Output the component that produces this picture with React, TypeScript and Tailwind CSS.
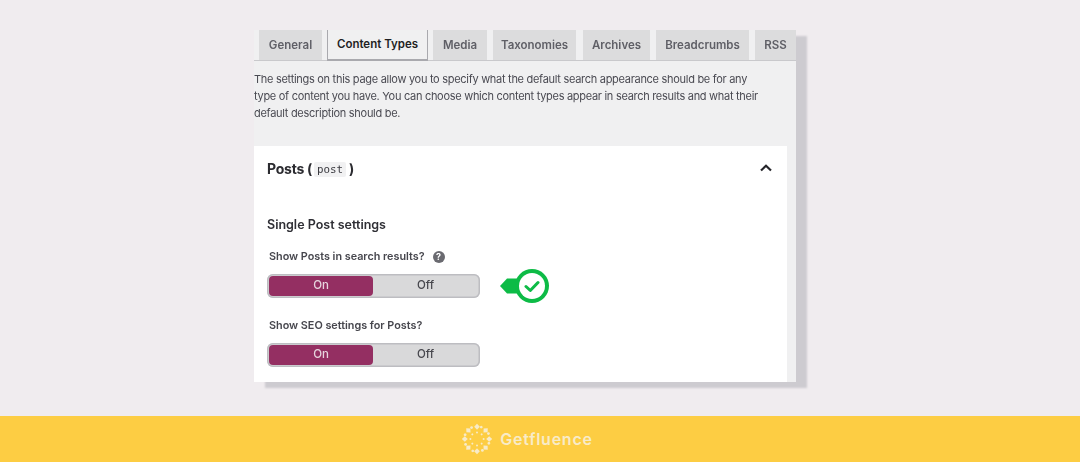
import React from "react";

const tabs = [
  { label: "General", w: "w-[63px]", ml: "ml-[5px]" },
  { label: "Content Types", w: "w-[101px]", ml: "ml-[5px]", active: true },
  { label: "Media", w: "w-[54px]", ml: "ml-[5px]" },
  { label: "Taxonomies", w: "w-[83px]", ml: "ml-[6px]" },
  { label: "Archives", w: "w-[67px]", ml: "ml-[7px]" },
  { label: "Breadcrumbs", w: "w-[93px]", ml: "ml-[6px]" },
  { label: "RSS", w: "w-[41px]", ml: "ml-[6px]" },
];

function Toggle() {
  return (
    <div className="flex h-[24px] w-[213px] rounded-[6px] bg-[#d9d9da] p-[2px] shadow-[inset_0_0_0_1.5px_#bdbdc1] text-[11.5px] font-medium">
      <div className="flex w-[104px] items-center justify-center rounded-[4px] bg-[#942f62] text-[#e6d5de]">On</div>
      <div className="flex flex-1 items-center justify-center text-[#47474d]">Off</div>
    </div>
  );
}

function Badge() {
  return (
    <svg width="50" height="36" viewBox="0 0 50 36" className="ml-[20px]">
      <path d="M0 18 L7 10.5 H24 V25.5 H7 Z" fill="#0dbb46" />
      <circle cx="32" cy="18" r="17" fill="#0dbb46" />
      <circle cx="32" cy="18" r="13" fill="#ffffff" />
      <path d="M26 18.5 L30.3 22.5 L38 14.5" fill="none" stroke="#0dbb46" strokeWidth="3" strokeLinecap="round" strokeLinejoin="round" />
    </svg>
  );
}

function Logo() {
  const n = 8;
  const items = Array.from({ length: n }, (_, i) => (i * 360) / n);
  return (
    <svg width="32" height="32" viewBox="0 0 32 32">
      <g fill="#f8ebc8">
        {items.map((a) => (
          <g key={a} transform={`rotate(${a} 16 16)`}>
            <path d="M16 0.8 L18.8 3.8 L16 6.8 L13.2 3.8 Z" />
            <circle cx="10.6" cy="4.6" r="1.4" />
            <circle cx="16" cy="9.4" r="1" />
          </g>
        ))}
      </g>
    </svg>
  );
}

export default function App() {
  return (
    <div
      className="flex h-[462px] w-[1080px] flex-col overflow-hidden bg-[#f0ecef]"
      style={{ fontFamily: "Inter, 'Liberation Sans', sans-serif" }}
    >
      <main className="h-[416px] pl-[254px] pt-[30px]">
        <section className="h-[352px] w-[542px] bg-[#f0f0f1] shadow-[11px_6px_2px_#cdcbd0] blur-[0.45px]">
          <div className="flex h-[31px] items-start border-b border-[#c9c9cc]">
            {tabs.map((t) => (
              <div
                key={t.label}
                className={`${t.w} ${t.ml} flex items-center justify-center pt-[1px] text-[11.5px] font-semibold ${
                  t.active
                    ? "relative z-10 h-[31px] border-x border-b-2 border-[#a9a9ae] bg-[#f0f0f1] text-[#1f1f24]"
                    : "h-[30px] bg-[#dcdcdd] text-[#5f5f66]"
                }`}
              >
                {t.label}
              </div>
            ))}
          </div>
          <p className="mt-[10px] h-[75px] whitespace-nowrap text-[11px] leading-[17px] tracking-[-0.29px] text-[#4a4a52]">
            The settings on this page allow you to specify what the default search appearance should be for any
            <br />
            type of content you have. You can choose which content types appear in search results and what their
            <br />
            default description should be.
          </p>
          <div className="h-[236px] w-[533px] bg-white">
            <div className="flex items-center justify-between pl-[13px] pr-[14px] pt-[12px]">
              <h2 className="flex h-[20px] items-center text-[14px] font-bold tracking-[-0.25px] text-[#2b2b30]">
                Posts (
                <code className="ml-[2px] mr-[3px] mt-[3px] rounded-[2px] bg-[#f1f1f2] px-[3px] text-[10.8px] font-normal leading-[15px] tracking-normal text-[#3a3a40]" style={{ fontFamily: "'DejaVu Sans Mono', monospace" }}>
                  post
                </code>
                )
              </h2>
              <svg width="14" height="10" viewBox="0 0 14 10" fill="none">
                <path d="M2 7.5 L7 2.8 L12 7.5" stroke="#25252a" strokeWidth="2.2" />
              </svg>
            </div>
            <h3 className="ml-[13px] mt-[38px] text-[12.5px] font-semibold leading-[18px] text-[#2f2f35]">Single Post settings</h3>
            <div className="ml-[15px] mt-[15px] flex h-[16px] items-center text-[10.8px] font-semibold text-[#46464d]">
              Show Posts in search results?
              <span className="ml-[8px] flex h-[12px] w-[12px] items-center justify-center rounded-full bg-[#6a6a70] text-[9px] font-bold text-white">?</span>
            </div>
            <div className="ml-[13px] mt-[9px] flex h-[24px] items-center">
              <Toggle />
              <Badge />
            </div>
            <div className="ml-[15px] mt-[20px] flex h-[16px] items-center text-[10.8px] font-semibold text-[#46464d]">
              Show SEO settings for Posts?
            </div>
            <div className="ml-[13px] mt-[9px]">
              <Toggle />
            </div>
          </div>
        </section>
      </main>
      <footer className="flex h-[46px] items-center justify-center bg-[#fdcd43] pr-[26px]">
        <Logo />
        <span className="ml-[7px] text-[16px] font-semibold text-[#f8ebc8] tracking-[0.75px]" style={{ fontFamily: "Inter, sans-serif" }}>
          Getfluence
        </span>
      </footer>
    </div>
  );
}
